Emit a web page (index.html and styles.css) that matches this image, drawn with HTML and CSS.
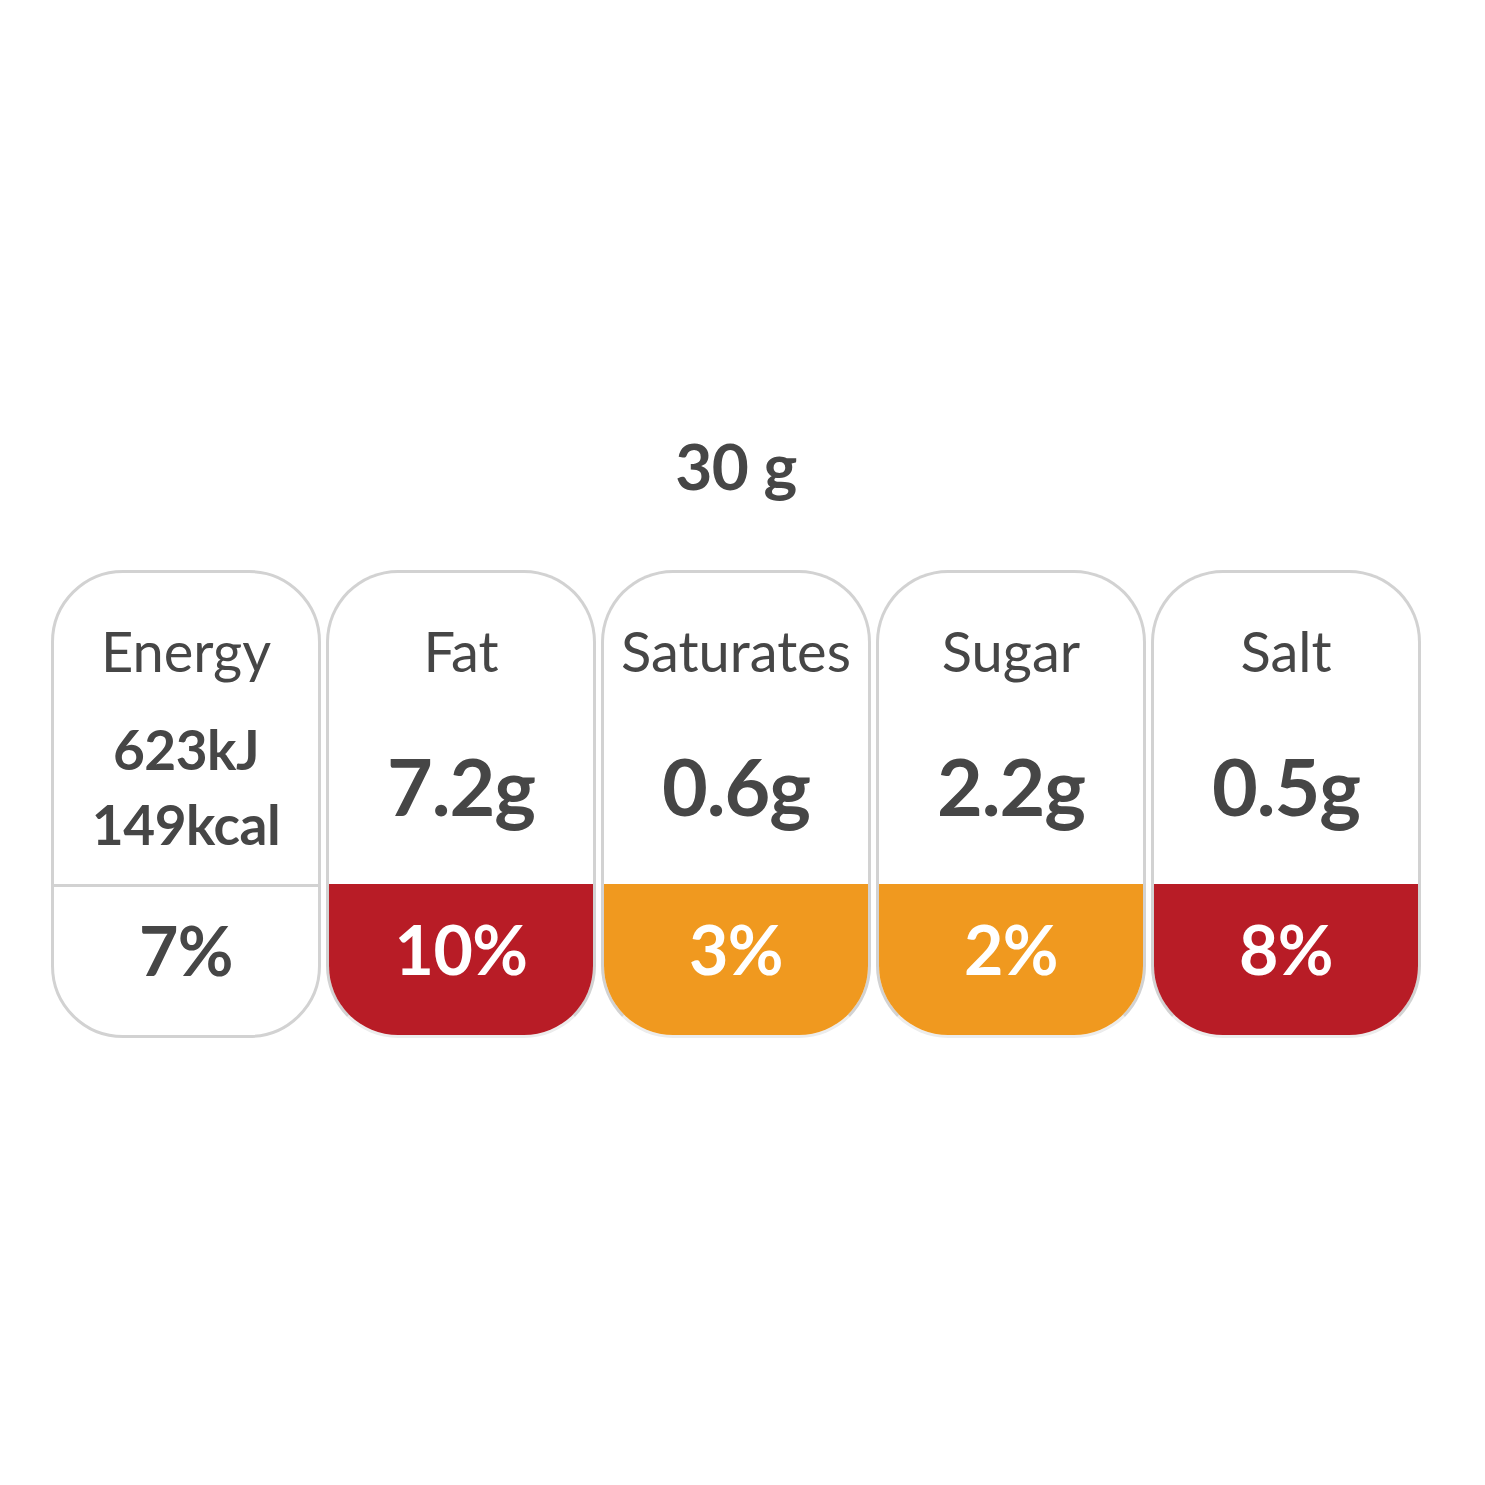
FILE: index.html
```html
<!DOCTYPE html>
<html lang="en">
<head>
<meta charset="utf-8">
<title>Nutrition</title>
<link rel="stylesheet" href="styles.css">
</head>
<body>
<main class="page">
  <h1 class="portion">30 g</h1>
  <div class="cards">
    <div class="card">
      <div class="card-top">
        <div class="name">Energy</div>
        <div class="value value-energy"><span>623kJ</span><span>149kcal</span></div>
      </div>
      <div class="card-bottom plain">7%</div>
    </div>
    <div class="card colored">
      <div class="card-top">
        <div class="name">Fat</div>
        <div class="value">7.2g</div>
      </div>
      <div class="card-bottom high">10%</div>
    </div>
    <div class="card colored">
      <div class="card-top">
        <div class="name">Saturates</div>
        <div class="value">0.6g</div>
      </div>
      <div class="card-bottom medium">3%</div>
    </div>
    <div class="card colored">
      <div class="card-top">
        <div class="name">Sugar</div>
        <div class="value">2.2g</div>
      </div>
      <div class="card-bottom medium">2%</div>
    </div>
    <div class="card colored">
      <div class="card-top">
        <div class="name">Salt</div>
        <div class="value">0.5g</div>
      </div>
      <div class="card-bottom high">8%</div>
    </div>
  </div>
</main>
</body>
</html>
```

FILE: styles.css
```css
* { box-sizing: border-box; }
html, body { margin: 0; padding: 0; background: #fff; }
body {
  font-family: "Lato", "Open Sans", sans-serif;
  color: #464646;
}
.page {
  min-height: 100vh;
  display: flex;
  flex-direction: column;
  align-items: center;
  justify-content: center;
  padding-bottom: 14px;
  padding-right: 13px;
}
.portion {
  margin: 0 0 72px;
  font-size: 64px;
  font-weight: 700;
  line-height: 1;
  letter-spacing: -0.5px;
}
.cards {
  display: flex;
  gap: 5px;
}
.card {
  width: 270px;
  height: 468px;
  border: 3px solid #d2d2d2;
  border-radius: 72px;
  overflow: hidden;
  display: flex;
  flex-direction: column;
  background: #fff;
}
.card.colored {
  border-bottom-color: #ececec;
}
.card-top {
  flex: 1;
  display: flex;
  flex-direction: column;
  align-items: center;
  padding-top: 50px;
}
.name {
  font-size: 56px;
  line-height: 1;
  font-weight: 400;
  letter-spacing: 0;
}
.value {
  flex: 1;
  display: flex;
  flex-direction: column;
  align-items: center;
  justify-content: center;
  font-size: 79px;
  font-weight: 700;
  line-height: 1;
  padding-top: 8px;
  letter-spacing: -1px;
}
.value-energy {
  font-size: 55px;
  line-height: 75px;
  padding-top: 12px;
  letter-spacing: -0.5px;
}
.card-bottom {
  height: 151px;
  display: flex;
  align-items: center;
  justify-content: center;
  font-size: 68px;
  font-weight: 700;
  letter-spacing: -0.5px;
  padding-bottom: 22px;
}
.card-bottom.plain {
  border-top: 3px solid #d2d2d2;
  color: #464646;
}
.card-bottom.high {
  background: #b81c26;
  color: #fff;
}
.card-bottom.medium {
  background: #f0991f;
  color: #fff;
}
```
